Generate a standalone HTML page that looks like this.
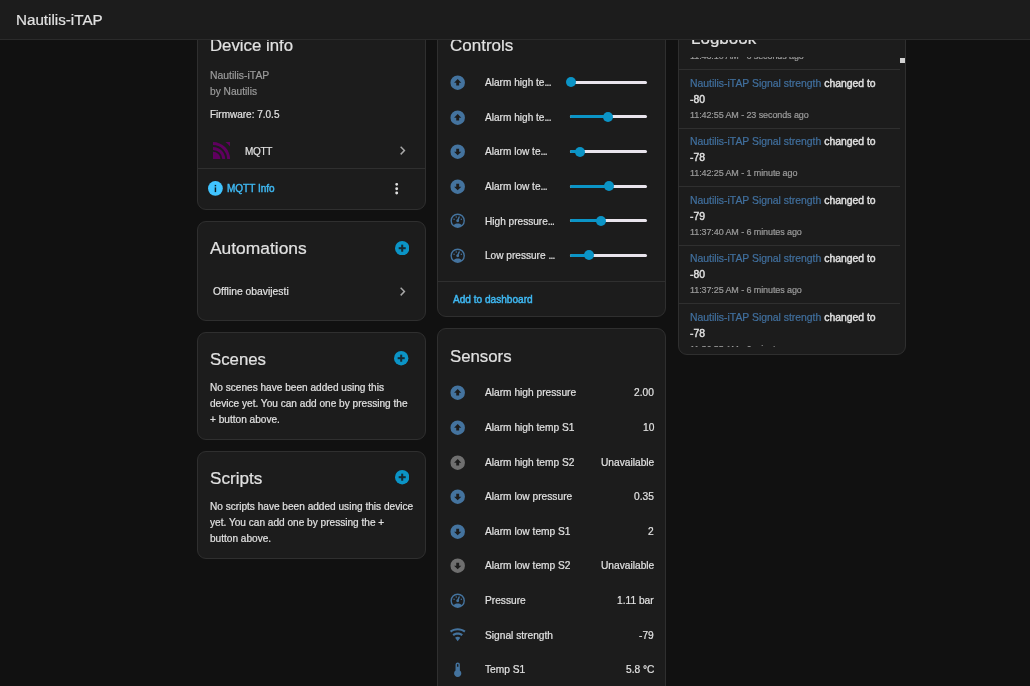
<!DOCTYPE html>
<html><head><meta charset="utf-8"><title>Nautilis-iTAP</title>
<style>
html,body{margin:0;padding:0;}
body{width:1030px;height:686px;overflow:hidden;background:#111111;position:relative;font-family:'Liberation Sans', sans-serif;}
.t{position:absolute;white-space:nowrap;line-height:1;will-change:transform;-webkit-text-stroke-width:0.2px;}
.card{position:absolute;box-sizing:border-box;background:#1c1c1c;border:1px solid #2f2f2f;border-radius:9px;}
</style></head><body>
<div class="card" style="left:197px;top:10px;width:229px;height:200px;"></div>
<div class="card" style="left:197px;top:221px;width:229px;height:100px;"></div>
<div class="card" style="left:197px;top:332px;width:229px;height:108px;"></div>
<div class="card" style="left:197px;top:451px;width:229px;height:108px;"></div>
<div class="card" style="left:437px;top:10px;width:229px;height:307px;"></div>
<div class="card" style="left:437px;top:328px;width:229px;height:400px;"></div>
<div class="card" style="left:678px;top:10px;width:228px;height:345px;"></div>
<div class="t" style="left:210.30px;top:37.78px;font-size:16.8px;color:#e1e1e1;font-weight:400;">Device info</div>
<div class="t" style="left:210.30px;top:71.00px;font-size:10.4px;color:#9b9b9b;font-weight:400;">Nautilis-iTAP</div>
<div class="t" style="left:210.30px;top:87.07px;font-size:10.2px;color:#9b9b9b;font-weight:400;">by Nautilis</div>
<div class="t" style="left:210.10px;top:109.94px;font-size:10.0px;color:#e1e1e1;font-weight:400;">Firmware: 7.0.5</div>
<svg style="position:absolute;left:212.7px;top:142px" width="17.2" height="17.2" viewBox="0 0 17 17"><g fill="#5f005f"><path d="M0 9.6A7.4 7.4 0 0 1 7.4 17H0Z"/><path d="M0 5A12 12 0 0 1 12 17H9.2A9.2 9.2 0 0 0 0 7.8Z"/><path d="M0 0.1A16.9 16.9 0 0 1 16.9 17H14A14 14 0 0 0 0 3Z"/><path d="M12.3 0H17V4.7A20.98 20.98 0 0 0 12.3 0Z"/></g></svg>
<div class="t" style="left:244.80px;top:146.63px;font-size:10.0px;color:#e1e1e1;font-weight:400;letter-spacing:-0.3px;">MQTT</div>
<svg style="position:absolute;left:393.70px;top:142.00px;" width="17.2" height="17.2" viewBox="0 0 24 24"><path fill="#a8a8a8" d="M8.59,16.58L13.17,12L8.59,7.41L10,6L16,12L10,18L8.59,16.58Z"/></svg>
<div style="position:absolute;left:197px;top:168px;width:229px;height:1px;background:#2f2f2f"></div>
<svg style="position:absolute;left:207.9px;top:181.2px" width="14.8" height="14.8" viewBox="0 0 14.8 14.8"><circle cx="7.4" cy="7.4" r="7.4" fill="#40c4ff"/><rect x="6.7" y="6.4" width="1.45" height="4.7" fill="#0d1b22"/><rect x="6.7" y="3.9" width="1.45" height="1.45" fill="#0d1b22"/></svg>
<div class="t" style="left:227.00px;top:184.03px;font-size:10.0px;color:#3fb8f2;font-weight:400;-webkit-text-stroke-width:0.45px;">MQTT Info</div>
<svg style="position:absolute;left:388.00px;top:180.10px;" width="17.4" height="17.4" viewBox="0 0 24 24"><path fill="#e1e1e1" d="M12,16A2,2 0 0,1 14,18A2,2 0 0,1 12,20A2,2 0 0,1 10,18A2,2 0 0,1 12,16M12,10A2,2 0 0,1 14,12A2,2 0 0,1 12,14A2,2 0 0,1 10,12A2,2 0 0,1 12,10M12,4A2,2 0 0,1 14,6A2,2 0 0,1 12,8A2,2 0 0,1 10,6A2,2 0 0,1 12,4Z"/></svg>
<div class="t" style="left:210.10px;top:240.27px;font-size:17.4px;color:#e1e1e1;font-weight:400;">Automations</div>
<svg style="position:absolute;left:394.60px;top:240.60px" width="14.4" height="14.4" viewBox="0 0 20 20"><circle cx="10" cy="10" r="10" fill="#0b94c6"/><rect x="5.1" y="8.6" width="9.8" height="2.8" fill="#172a33"/><rect x="8.6" y="5.1" width="2.8" height="9.8" fill="#172a33"/></svg>
<div class="t" style="left:212.60px;top:287.04px;font-size:10.35px;color:#e1e1e1;font-weight:400;">Offline obavijesti</div>
<svg style="position:absolute;left:393.90px;top:282.70px;" width="17.2" height="17.2" viewBox="0 0 24 24"><path fill="#a8a8a8" d="M8.59,16.58L13.17,12L8.59,7.41L10,6L16,12L10,18L8.59,16.58Z"/></svg>
<div class="t" style="left:210.10px;top:351.78px;font-size:16.8px;color:#e1e1e1;font-weight:400;">Scenes</div>
<svg style="position:absolute;left:394.40px;top:351.40px" width="14.4" height="14.4" viewBox="0 0 20 20"><circle cx="10" cy="10" r="10" fill="#0b94c6"/><rect x="5.1" y="8.6" width="9.8" height="2.8" fill="#172a33"/><rect x="8.6" y="5.1" width="2.8" height="9.8" fill="#172a33"/></svg>
<div class="t" style="left:209.80px;top:382.85px;font-size:10.1px;color:#e1e1e1;font-weight:400;">No scenes have been added using this</div>
<div class="t" style="left:209.80px;top:398.85px;font-size:10.1px;color:#e1e1e1;font-weight:400;">device yet. You can add one by pressing the</div>
<div class="t" style="left:209.80px;top:414.85px;font-size:10.1px;color:#e1e1e1;font-weight:400;">+ button above.</div>
<div class="t" style="left:210.10px;top:469.82px;font-size:17.1px;color:#e1e1e1;font-weight:400;">Scripts</div>
<svg style="position:absolute;left:394.60px;top:470.40px" width="14.4" height="14.4" viewBox="0 0 20 20"><circle cx="10" cy="10" r="10" fill="#0b94c6"/><rect x="5.1" y="8.6" width="9.8" height="2.8" fill="#172a33"/><rect x="8.6" y="5.1" width="2.8" height="9.8" fill="#172a33"/></svg>
<div class="t" style="left:209.80px;top:502.15px;font-size:10.1px;color:#e1e1e1;font-weight:400;">No scripts have been added using this device</div>
<div class="t" style="left:209.80px;top:518.15px;font-size:10.1px;color:#e1e1e1;font-weight:400;">yet. You can add one by pressing the +</div>
<div class="t" style="left:209.80px;top:534.15px;font-size:10.1px;color:#e1e1e1;font-weight:400;">button above.</div>
<div class="t" style="left:450.10px;top:36.81px;font-size:17.0px;color:#e1e1e1;font-weight:400;">Controls</div>
<svg style="position:absolute;left:449.40px;top:74.00px;" width="17.4" height="17.4" viewBox="0 0 24 24"><path fill="#44739e" d="M12,22A10,10 0 0,1 2,12A10,10 0 0,1 12,2A10,10 0 0,1 22,12A10,10 0 0,1 12,22M12,7L7,12H10V16H14V12H17L12,7Z"/></svg>
<div class="t" style="left:484.60px;top:78.15px;font-size:10.1px;color:#e1e1e1;font-weight:400;">Alarm high te<span style="letter-spacing:-0.7px">...</span></div>
<div style="position:absolute;left:570px;top:80.70px;width:77px;height:3.2px;border-radius:2px;background:#e9e4ec"></div>
<div style="position:absolute;left:570px;top:80.70px;width:1.20px;height:3.2px;border-radius:2px 0 0 2px;background:#0b94c6"></div>
<div style="position:absolute;left:566.20px;top:77.30px;width:10px;height:10px;border-radius:50%;background:#0b94c6"></div>
<svg style="position:absolute;left:449.40px;top:108.60px;" width="17.4" height="17.4" viewBox="0 0 24 24"><path fill="#44739e" d="M12,22A10,10 0 0,1 2,12A10,10 0 0,1 12,2A10,10 0 0,1 22,12A10,10 0 0,1 12,22M12,7L7,12H10V16H14V12H17L12,7Z"/></svg>
<div class="t" style="left:484.60px;top:112.75px;font-size:10.1px;color:#e1e1e1;font-weight:400;">Alarm high te<span style="letter-spacing:-0.7px">...</span></div>
<div style="position:absolute;left:570px;top:115.30px;width:77px;height:3.2px;border-radius:2px;background:#e9e4ec"></div>
<div style="position:absolute;left:570px;top:115.30px;width:37.80px;height:3.2px;border-radius:2px 0 0 2px;background:#0b94c6"></div>
<div style="position:absolute;left:602.80px;top:111.90px;width:10px;height:10px;border-radius:50%;background:#0b94c6"></div>
<svg style="position:absolute;left:449.40px;top:143.20px;" width="17.4" height="17.4" viewBox="0 0 24 24"><path fill="#44739e" d="M12,2A10,10 0 0,1 22,12A10,10 0 0,1 12,22A10,10 0 0,1 2,12A10,10 0 0,1 12,2M12,17L17,12H14V8H10V12H7L12,17Z"/></svg>
<div class="t" style="left:484.60px;top:147.35px;font-size:10.1px;color:#e1e1e1;font-weight:400;">Alarm low te<span style="letter-spacing:-0.7px">...</span></div>
<div style="position:absolute;left:570px;top:149.90px;width:77px;height:3.2px;border-radius:2px;background:#e9e4ec"></div>
<div style="position:absolute;left:570px;top:149.90px;width:10.40px;height:3.2px;border-radius:2px 0 0 2px;background:#0b94c6"></div>
<div style="position:absolute;left:575.40px;top:146.50px;width:10px;height:10px;border-radius:50%;background:#0b94c6"></div>
<svg style="position:absolute;left:449.40px;top:177.80px;" width="17.4" height="17.4" viewBox="0 0 24 24"><path fill="#44739e" d="M12,2A10,10 0 0,1 22,12A10,10 0 0,1 12,22A10,10 0 0,1 2,12A10,10 0 0,1 12,2M12,17L17,12H14V8H10V12H7L12,17Z"/></svg>
<div class="t" style="left:484.60px;top:181.95px;font-size:10.1px;color:#e1e1e1;font-weight:400;">Alarm low te<span style="letter-spacing:-0.7px">...</span></div>
<div style="position:absolute;left:570px;top:184.50px;width:77px;height:3.2px;border-radius:2px;background:#e9e4ec"></div>
<div style="position:absolute;left:570px;top:184.50px;width:38.70px;height:3.2px;border-radius:2px 0 0 2px;background:#0b94c6"></div>
<div style="position:absolute;left:603.70px;top:181.10px;width:10px;height:10px;border-radius:50%;background:#0b94c6"></div>
<svg style="position:absolute;left:449.40px;top:212.40px;" width="17.4" height="17.4" viewBox="0 0 24 24"><path fill="#44739e" d="M12,2A10,10 0 0,0 2,12A10,10 0 0,0 12,22A10,10 0 0,0 22,12A10,10 0 0,0 12,2M12,4A8,8 0 0,1 20,12C20,14.4 19,16.5 17.3,18C15.9,16.7 14,16 12,16C10,16 8.2,16.7 6.7,18C5,16.5 4,14.4 4,12A8,8 0 0,1 12,4M14,5.89C13.62,5.9 13.26,6.15 13.1,6.54L11.81,9.77L11.71,10C11,10.13 10.41,10.6 10.14,11.26C9.73,12.29 10.23,13.45 11.26,13.86C12.29,14.27 13.45,13.77 13.86,12.74C14.12,12.08 14,11.32 13.57,10.76L13.67,10.5L14.96,7.29L14.97,7.26C15.17,6.75 14.92,6.17 14.41,5.96C14.28,5.91 14.14,5.89 14,5.89M10,6A1,1 0 0,0 9,7A1,1 0 0,0 10,8A1,1 0 0,0 11,7A1,1 0 0,0 10,6M7,9A1,1 0 0,0 6,10A1,1 0 0,0 7,11A1,1 0 0,0 8,10A1,1 0 0,0 7,9M17,9A1,1 0 0,0 16,10A1,1 0 0,0 17,11A1,1 0 0,0 18,10A1,1 0 0,0 17,9Z"/></svg>
<div class="t" style="left:484.60px;top:216.55px;font-size:10.1px;color:#e1e1e1;font-weight:400;">High pressure<span style="letter-spacing:-0.7px">...</span></div>
<div style="position:absolute;left:570px;top:219.10px;width:77px;height:3.2px;border-radius:2px;background:#e9e4ec"></div>
<div style="position:absolute;left:570px;top:219.10px;width:30.60px;height:3.2px;border-radius:2px 0 0 2px;background:#0b94c6"></div>
<div style="position:absolute;left:595.60px;top:215.70px;width:10px;height:10px;border-radius:50%;background:#0b94c6"></div>
<svg style="position:absolute;left:449.40px;top:247.00px;" width="17.4" height="17.4" viewBox="0 0 24 24"><path fill="#44739e" d="M12,2A10,10 0 0,0 2,12A10,10 0 0,0 12,22A10,10 0 0,0 22,12A10,10 0 0,0 12,2M12,4A8,8 0 0,1 20,12C20,14.4 19,16.5 17.3,18C15.9,16.7 14,16 12,16C10,16 8.2,16.7 6.7,18C5,16.5 4,14.4 4,12A8,8 0 0,1 12,4M14,5.89C13.62,5.9 13.26,6.15 13.1,6.54L11.81,9.77L11.71,10C11,10.13 10.41,10.6 10.14,11.26C9.73,12.29 10.23,13.45 11.26,13.86C12.29,14.27 13.45,13.77 13.86,12.74C14.12,12.08 14,11.32 13.57,10.76L13.67,10.5L14.96,7.29L14.97,7.26C15.17,6.75 14.92,6.17 14.41,5.96C14.28,5.91 14.14,5.89 14,5.89M10,6A1,1 0 0,0 9,7A1,1 0 0,0 10,8A1,1 0 0,0 11,7A1,1 0 0,0 10,6M7,9A1,1 0 0,0 6,10A1,1 0 0,0 7,11A1,1 0 0,0 8,10A1,1 0 0,0 7,9M17,9A1,1 0 0,0 16,10A1,1 0 0,0 17,11A1,1 0 0,0 18,10A1,1 0 0,0 17,9Z"/></svg>
<div class="t" style="left:484.60px;top:251.15px;font-size:10.1px;color:#e1e1e1;font-weight:400;">Low pressure <span style="letter-spacing:-0.7px">...</span></div>
<div style="position:absolute;left:570px;top:253.70px;width:77px;height:3.2px;border-radius:2px;background:#e9e4ec"></div>
<div style="position:absolute;left:570px;top:253.70px;width:18.50px;height:3.2px;border-radius:2px 0 0 2px;background:#0b94c6"></div>
<div style="position:absolute;left:583.50px;top:250.30px;width:10px;height:10px;border-radius:50%;background:#0b94c6"></div>
<div style="position:absolute;left:437px;top:281px;width:229px;height:1px;background:#2f2f2f"></div>
<div class="t" style="left:452.60px;top:294.95px;font-size:10.1px;color:#3fb8f2;font-weight:400;-webkit-text-stroke-width:0.45px;">Add to dashboard</div>
<div class="t" style="left:450.00px;top:348.78px;font-size:16.8px;color:#e1e1e1;font-weight:400;">Sensors</div>
<svg style="position:absolute;left:449.20px;top:384.40px;" width="17.4" height="17.4" viewBox="0 0 24 24"><path fill="#44739e" d="M12,22A10,10 0 0,1 2,12A10,10 0 0,1 12,2A10,10 0 0,1 22,12A10,10 0 0,1 12,22M12,7L7,12H10V16H14V12H17L12,7Z"/></svg>
<div class="t" style="left:484.70px;top:388.37px;font-size:10.2px;color:#e1e1e1;font-weight:400;">Alarm high pressure</div>
<div class="t" style="right:376.00px;top:388.37px;font-size:10.2px;color:#e1e1e1;font-weight:400;">2.00</div>
<svg style="position:absolute;left:449.20px;top:419.00px;" width="17.4" height="17.4" viewBox="0 0 24 24"><path fill="#44739e" d="M12,22A10,10 0 0,1 2,12A10,10 0 0,1 12,2A10,10 0 0,1 22,12A10,10 0 0,1 12,22M12,7L7,12H10V16H14V12H17L12,7Z"/></svg>
<div class="t" style="left:484.70px;top:422.97px;font-size:10.2px;color:#e1e1e1;font-weight:400;">Alarm high temp S1</div>
<div class="t" style="right:376.00px;top:422.97px;font-size:10.2px;color:#e1e1e1;font-weight:400;">10</div>
<svg style="position:absolute;left:449.20px;top:453.60px;" width="17.4" height="17.4" viewBox="0 0 24 24"><path fill="#6f6f6f" d="M12,22A10,10 0 0,1 2,12A10,10 0 0,1 12,2A10,10 0 0,1 22,12A10,10 0 0,1 12,22M12,7L7,12H10V16H14V12H17L12,7Z"/></svg>
<div class="t" style="left:484.70px;top:457.57px;font-size:10.2px;color:#e1e1e1;font-weight:400;">Alarm high temp S2</div>
<div class="t" style="right:376.00px;top:457.57px;font-size:10.2px;color:#e1e1e1;font-weight:400;">Unavailable</div>
<svg style="position:absolute;left:449.20px;top:488.20px;" width="17.4" height="17.4" viewBox="0 0 24 24"><path fill="#44739e" d="M12,2A10,10 0 0,1 22,12A10,10 0 0,1 12,22A10,10 0 0,1 2,12A10,10 0 0,1 12,2M12,17L17,12H14V8H10V12H7L12,17Z"/></svg>
<div class="t" style="left:484.70px;top:492.17px;font-size:10.2px;color:#e1e1e1;font-weight:400;">Alarm low pressure</div>
<div class="t" style="right:376.00px;top:492.17px;font-size:10.2px;color:#e1e1e1;font-weight:400;">0.35</div>
<svg style="position:absolute;left:449.20px;top:522.80px;" width="17.4" height="17.4" viewBox="0 0 24 24"><path fill="#44739e" d="M12,2A10,10 0 0,1 22,12A10,10 0 0,1 12,22A10,10 0 0,1 2,12A10,10 0 0,1 12,2M12,17L17,12H14V8H10V12H7L12,17Z"/></svg>
<div class="t" style="left:484.70px;top:526.77px;font-size:10.2px;color:#e1e1e1;font-weight:400;">Alarm low temp S1</div>
<div class="t" style="right:376.00px;top:526.77px;font-size:10.2px;color:#e1e1e1;font-weight:400;">2</div>
<svg style="position:absolute;left:449.20px;top:557.40px;" width="17.4" height="17.4" viewBox="0 0 24 24"><path fill="#6f6f6f" d="M12,2A10,10 0 0,1 22,12A10,10 0 0,1 12,22A10,10 0 0,1 2,12A10,10 0 0,1 12,2M12,17L17,12H14V8H10V12H7L12,17Z"/></svg>
<div class="t" style="left:484.70px;top:561.37px;font-size:10.2px;color:#e1e1e1;font-weight:400;">Alarm low temp S2</div>
<div class="t" style="right:376.00px;top:561.37px;font-size:10.2px;color:#e1e1e1;font-weight:400;">Unavailable</div>
<svg style="position:absolute;left:449.20px;top:592.00px;" width="17.4" height="17.4" viewBox="0 0 24 24"><path fill="#44739e" d="M12,2A10,10 0 0,0 2,12A10,10 0 0,0 12,22A10,10 0 0,0 22,12A10,10 0 0,0 12,2M12,4A8,8 0 0,1 20,12C20,14.4 19,16.5 17.3,18C15.9,16.7 14,16 12,16C10,16 8.2,16.7 6.7,18C5,16.5 4,14.4 4,12A8,8 0 0,1 12,4M14,5.89C13.62,5.9 13.26,6.15 13.1,6.54L11.81,9.77L11.71,10C11,10.13 10.41,10.6 10.14,11.26C9.73,12.29 10.23,13.45 11.26,13.86C12.29,14.27 13.45,13.77 13.86,12.74C14.12,12.08 14,11.32 13.57,10.76L13.67,10.5L14.96,7.29L14.97,7.26C15.17,6.75 14.92,6.17 14.41,5.96C14.28,5.91 14.14,5.89 14,5.89M10,6A1,1 0 0,0 9,7A1,1 0 0,0 10,8A1,1 0 0,0 11,7A1,1 0 0,0 10,6M7,9A1,1 0 0,0 6,10A1,1 0 0,0 7,11A1,1 0 0,0 8,10A1,1 0 0,0 7,9M17,9A1,1 0 0,0 16,10A1,1 0 0,0 17,11A1,1 0 0,0 18,10A1,1 0 0,0 17,9Z"/></svg>
<div class="t" style="left:484.70px;top:595.97px;font-size:10.2px;color:#e1e1e1;font-weight:400;">Pressure</div>
<div class="t" style="right:376.00px;top:595.97px;font-size:10.2px;color:#e1e1e1;font-weight:400;">1.11 bar</div>
<svg style="position:absolute;left:449.20px;top:625.80px;" width="17.4" height="17.4" viewBox="0 0 24 24"><path fill="#44739e" d="M12,21L15.6,16.2C14.6,15.45 13.35,15 12,15C10.65,15 9.4,15.45 8.4,16.2L12,21M12,3C7.95,3 4.21,4.34 1.2,6.6L3,9C5.5,7.12 8.62,6 12,6C15.38,6 18.5,7.12 21,9L22.8,6.6C19.79,4.34 16.05,3 12,3M12,9C9.3,9 6.81,9.89 4.8,11.4L6.6,13.8C8.1,12.67 9.97,12 12,12C14.03,12 15.9,12.67 17.4,13.8L19.2,11.4C17.19,9.89 14.7,9 12,9Z"/></svg>
<div class="t" style="left:484.70px;top:630.57px;font-size:10.2px;color:#e1e1e1;font-weight:400;">Signal strength</div>
<div class="t" style="right:376.00px;top:630.57px;font-size:10.2px;color:#e1e1e1;font-weight:400;">-79</div>
<svg style="position:absolute;left:449.20px;top:661.20px;" width="17.4" height="17.4" viewBox="0 0 24 24"><path fill="#44739e" d="M15 13V5A3 3 0 0 0 9 5V13A5 5 0 1 0 15 13M12 4A1 1 0 0 1 13 5V8H11V5A1 1 0 0 1 12 4Z"/></svg>
<div class="t" style="left:484.70px;top:665.17px;font-size:10.2px;color:#e1e1e1;font-weight:400;">Temp S1</div>
<div class="t" style="right:376.00px;top:665.17px;font-size:10.2px;color:#e1e1e1;font-weight:400;">5.8 °C</div>
<div class="t" style="left:690.50px;top:30.31px;font-size:17.0px;color:#e1e1e1;font-weight:400;">Logbook</div>
<div style="position:absolute;left:679px;top:56.5px;width:221px;height:290.5px;overflow:hidden">
<div class="t" style="left:11.30px;top:-4.22px;font-size:9.0px;color:#9b9b9b;font-weight:400"><span style="letter-spacing:-0.1px">11:43:10 AM - 6 seconds ago</span></div>
<div style="position:absolute;left:0;top:12.70px;width:222px;height:1px;background:#2f2f2f"></div>
<div class="t" style="left:11.30px;top:22.40px;font-size:10.4px;color:#e1e1e1;font-weight:400"><span style="color:#41709f;-webkit-text-stroke-width:0.2px">Nautilis-iTAP Signal strength</span> <span style="-webkit-text-stroke-width:0.4px">changed to</span></div>
<div class="t" style="left:11.30px;top:38.20px;font-size:10.4px;color:#e1e1e1;font-weight:400"><span style="-webkit-text-stroke-width:0.4px">-80</span></div>
<div class="t" style="left:11.30px;top:54.28px;font-size:9.0px;color:#9b9b9b;font-weight:400"><span style="letter-spacing:-0.1px">11:42:55 AM - 23 seconds ago</span></div>
<div style="position:absolute;left:0;top:71.20px;width:222px;height:1px;background:#2f2f2f"></div>
<div class="t" style="left:11.30px;top:80.90px;font-size:10.4px;color:#e1e1e1;font-weight:400"><span style="color:#41709f;-webkit-text-stroke-width:0.2px">Nautilis-iTAP Signal strength</span> <span style="-webkit-text-stroke-width:0.4px">changed to</span></div>
<div class="t" style="left:11.30px;top:96.70px;font-size:10.4px;color:#e1e1e1;font-weight:400"><span style="-webkit-text-stroke-width:0.4px">-78</span></div>
<div class="t" style="left:11.30px;top:112.78px;font-size:9.0px;color:#9b9b9b;font-weight:400"><span style="letter-spacing:-0.1px">11:42:25 AM - 1 minute ago</span></div>
<div style="position:absolute;left:0;top:129.70px;width:222px;height:1px;background:#2f2f2f"></div>
<div class="t" style="left:11.30px;top:139.40px;font-size:10.4px;color:#e1e1e1;font-weight:400"><span style="color:#41709f;-webkit-text-stroke-width:0.2px">Nautilis-iTAP Signal strength</span> <span style="-webkit-text-stroke-width:0.4px">changed to</span></div>
<div class="t" style="left:11.30px;top:155.20px;font-size:10.4px;color:#e1e1e1;font-weight:400"><span style="-webkit-text-stroke-width:0.4px">-79</span></div>
<div class="t" style="left:11.30px;top:171.28px;font-size:9.0px;color:#9b9b9b;font-weight:400"><span style="letter-spacing:-0.1px">11:37:40 AM - 6 minutes ago</span></div>
<div style="position:absolute;left:0;top:188.20px;width:222px;height:1px;background:#2f2f2f"></div>
<div class="t" style="left:11.30px;top:197.90px;font-size:10.4px;color:#e1e1e1;font-weight:400"><span style="color:#41709f;-webkit-text-stroke-width:0.2px">Nautilis-iTAP Signal strength</span> <span style="-webkit-text-stroke-width:0.4px">changed to</span></div>
<div class="t" style="left:11.30px;top:213.70px;font-size:10.4px;color:#e1e1e1;font-weight:400"><span style="-webkit-text-stroke-width:0.4px">-80</span></div>
<div class="t" style="left:11.30px;top:229.78px;font-size:9.0px;color:#9b9b9b;font-weight:400"><span style="letter-spacing:-0.1px">11:37:25 AM - 6 minutes ago</span></div>
<div style="position:absolute;left:0;top:246.70px;width:222px;height:1px;background:#2f2f2f"></div>
<div class="t" style="left:11.30px;top:256.40px;font-size:10.4px;color:#e1e1e1;font-weight:400"><span style="color:#41709f;-webkit-text-stroke-width:0.2px">Nautilis-iTAP Signal strength</span> <span style="-webkit-text-stroke-width:0.4px">changed to</span></div>
<div class="t" style="left:11.30px;top:272.20px;font-size:10.4px;color:#e1e1e1;font-weight:400"><span style="-webkit-text-stroke-width:0.4px">-78</span></div>
<div class="t" style="left:11.30px;top:288.28px;font-size:9.0px;color:#9b9b9b;font-weight:400"><span style="letter-spacing:-0.1px">11:36:55 AM - 6 minutes ago</span></div>
</div>
<div style="position:absolute;left:900px;top:58px;width:5px;height:5px;background:#d2d2d2;border:0 solid #eee"></div>
<div style="position:absolute;left:0;top:0;width:1030px;height:39px;background:#1c1c1c;border-bottom:1px solid #2b2b2b;z-index:5"></div>
<div class="t" style="left:16.20px;top:12.33px;font-size:15.2px;color:#e1e1e1;font-weight:400;z-index:6;">Nautilis-iTAP</div>
</body></html>
